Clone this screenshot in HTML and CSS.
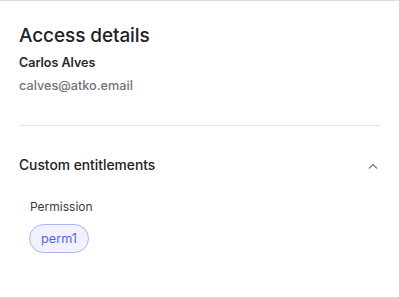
FILE: index.html
```html
<!DOCTYPE html>
<html>
<head>
<meta charset="utf-8">
<link rel="stylesheet" href="styles.css">
</head>
<body>
<div class="panel">
  <h1 class="title">Access details</h1>
  <div class="name">Carlos Alves</div>
  <div class="email">calves@atko.email</div>
  <hr class="divider">
  <div class="section-head">
    <span class="section-title">Custom entitlements</span>
    <svg class="chevron" width="10" height="6" viewBox="0 0 10 6"><path d="M1 5.5 L5 1.5 L9 5.5" fill="none" stroke="#808080" stroke-width="1.3"/></svg>
  </div>
  <div class="perm">
    <div class="perm-label">Permission</div>
    <span class="pill">perm1</span>
  </div>
</div>
</body>
</html>
```
FILE: styles.css
```css
html, body { margin: 0; padding: 0; background: #fff; }
body { font-family: Inter, "Noto Sans", sans-serif; color: #1d1d21; width: 399px; height: 297px; overflow: hidden; }
.panel { border-top: 1px solid #dcdcdc; padding: 23px 19px 0 19px; }
.title { margin: 0; font-size: 19px; font-weight: 500; line-height: 24px; letter-spacing: -0.1px; color: #212126; }
.name { margin-top: 7px; font-size: 12.5px; font-weight: 600; line-height: 16px; color: #27272c; }
.email { margin-top: 7px; font-size: 12.7px; font-weight: 500; line-height: 16px; color: #737378; }
.divider { border: 0; border-top: 1px solid #e2e2e2; margin: 31px 0 0 0; height: 0; }
.section-head { display: flex; align-items: center; justify-content: space-between; margin-top: 30px; height: 18px; }
.section-title { font-size: 13.8px; font-weight: 500; color: #212126; }
.chevron { margin-right: 2px; margin-top: 1px; }
.perm { padding-left: 11px; margin-top: 25px; }
.perm-label { font-size: 12px; line-height: 16px; color: #3a3a40; }
.pill { display: inline-block; margin-top: 9px; margin-left: -1px; height: 27px; line-height: 27px; padding: 0 11px; border: 1px solid #a9b3f5; border-radius: 15px; background: #f1f2fd; color: #5366dd; font-size: 12.7px; }
```
